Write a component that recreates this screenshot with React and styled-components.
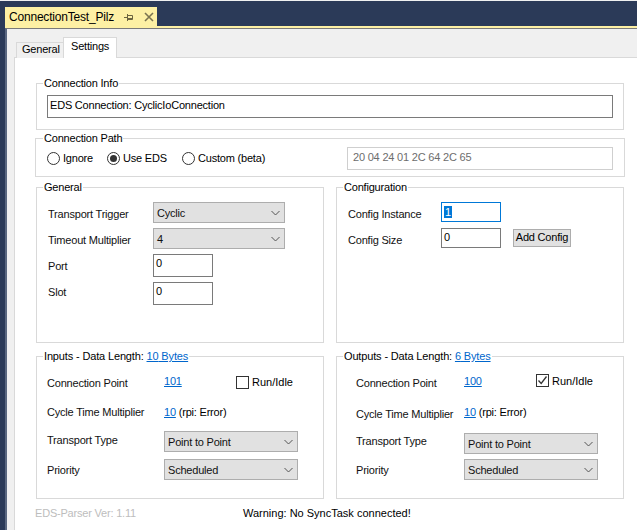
import React from 'react';
import styled, { createGlobalStyle } from 'styled-components';

const Global = createGlobalStyle`
  html, body { margin: 0; padding: 0; background: #2b3a58; }
  body { font-family: "Liberation Sans", Arial, sans-serif; font-size: 11px; letter-spacing: -0.2px; color: #000; }
  * { box-sizing: border-box; }
`;

const Window = styled.div`
  width: 637px;
  height: 530px;
  overflow: hidden;
  display: flex;
  flex-direction: column;
  background: #2b3a58;
  border-top: 1px solid #f0f0f0;
`;
const DocTabBar = styled.div`
  height: 25px;
  padding: 6px 0 0 5px;
  flex: none;
`;
const DocTab = styled.div`
  width: 152px;
  height: 19px;
  background: #fdf0a4;
  display: flex;
  align-items: center;
  padding-left: 4px;
  font-size: 12px;
  white-space: nowrap;
`;
const DocTitle = styled.span`
  width: 115px;
`;
const DocIcon = styled.svg`
  width: 10px;
  height: 10px;
  flex: none;
  margin-right: ${p => p.$mr}px;
`;
const Shell = styled.div`
  flex: 1;
  min-height: 0;
  margin-left: 5px;
  border-top: 2px solid #fdf0a4;
  display: flex;
  flex-direction: column;
`;
const Body = styled.div`
  flex: 1;
  min-height: 0;
  border-top: 1px solid #7a7a7a;
  border-left: 2px solid #5a6780;
  background: #f0f0f0;
  padding: 0 0 0 7px;
  display: flex;
  flex-direction: column;
`;
const Tabs = styled.div`
  height: 29px;
  flex: none;
  display: flex;
  align-items: flex-end;
  padding-left: 2px;
  position: relative;
  z-index: 1;
`;
const Tab = styled.div`
  height: ${p => (p.$active ? 21 : 16)}px;
  width: ${p => p.$w}px;
  background: ${p => (p.$active ? '#fff' : '#f0f0f0')};
  border: 1px solid #d9d9d9;
  border-bottom: none;
  border-right: ${p => (p.$active ? '1px solid #d9d9d9' : 'none')};
  padding: ${p => (p.$active ? '2px 0 0 7px' : '0 0 0 5px')};
  line-height: 13px;
  white-space: nowrap;
`;
const Page = styled.div`
  flex: 1;
  min-height: 0;
  background: #fff;
  border-top: 1px solid #d9d9d9;
  border-left: 1px solid #d9d9d9;
  margin-top: -1px;
  padding: 25px 13px 0 21px;
  display: flex;
  flex-direction: column;
`;
const Group = styled.section`
  position: relative;
  flex: none;
  border: 1px solid #d9d9d9;
  height: ${p => p.$h}px;
  margin: ${p => p.$m || 0};
`;
const Legend = styled.div`
  position: absolute;
  top: -7px;
  left: ${p => p.$x || 6}px;
  background: #fff;
  padding: 0 1px;
  line-height: 13px;
  white-space: nowrap;
`;
const IoLegend = styled(Legend)`
  letter-spacing: -0.15px;
`;
const InfoField = styled.div`
  position: absolute;
  left: 10px;
  right: 10px;
  top: 11px;
  height: 23px;
  border: 1px solid #7a7a7a;
  padding: 0 2px;
  line-height: 19px;
`;
const PathRow = styled.div`
  height: 100%;
  display: flex;
  align-items: center;
  padding: 1px 11px 0 11px;
`;
const Radio = styled.label`
  display: flex;
  align-items: center;
  gap: 3px;
  width: ${p => p.$w}px;
  white-space: nowrap;
`;
const RadioDot = styled.span`
  width: 13px;
  height: 13px;
  flex: none;
  border-radius: 50%;
  border: 1px solid #333;
  display: flex;
  align-items: center;
  justify-content: center;
  &::after {
    content: '';
    width: 7px;
    height: 7px;
    border-radius: 50%;
    background: ${p => (p.$on ? '#333' : 'transparent')};
  }
`;
const PathField = styled.div`
  margin-left: auto;
  width: 266px;
  height: 23px;
  border: 1px solid #cfcfcf;
  padding: 0 5px;
  line-height: 18px;
  color: #6d6d6d;
`;
const Split = styled.div`
  flex: none;
  display: grid;
  grid-template-columns: 288px 288px;
  column-gap: 12px;
  margin-top: ${p => p.$mt}px;
`;
const FormGrid = styled.div`
  display: grid;
  grid-template-columns: ${p => p.$col}px auto;
  justify-content: start;
  align-items: center;
  row-gap: ${p => p.$gap}px;
  padding: 14px 0 0 11px;
`;
const Label = styled.span`
  white-space: nowrap;
  color: #111;
  margin-top: ${p => p.$mt || 0}px;
`;
const Select = styled.div`
  width: ${p => p.$w}px;
  height: 21px;
  background: #e1e1e1;
  border: 1px solid #adadad;
  display: flex;
  align-items: center;
  justify-content: space-between;
  padding: 0 4px 0 3px;
  color: #111;
`;
const Chevron = () => (
  <svg width="9" height="6" viewBox="0 0 9 6" fill="none">
    <path d="M0.5 1 L4.5 5 L8.5 1" stroke="#555" strokeWidth="1" />
  </svg>
);
const TextBox = styled.div`
  width: 60px;
  height: ${p => p.$h}px;
  border: 1px solid ${p => (p.$focus ? '#0078d7' : '#7a7a7a')};
  padding: 1px 2px 0 2px;
  line-height: 14px;
`;
const Selected = styled.span`
  background: #0078d7;
  color: #fff;
  padding: 0 1px;
  display: inline-block;
  height: 12px;
  line-height: 12px;
  margin-top: 2px;
  vertical-align: top;
`;
const ConfigRow = styled.div`
  display: flex;
  align-items: center;
  gap: 12px;
`;
const Button = styled.div`
  width: 58px;
  height: 18px;
  background: #e1e1e1;
  border: 1px solid #adadad;
  text-align: center;
  line-height: 15px;
  white-space: nowrap;
`;
const Link = styled.span`
  color: #0066cc;
  text-decoration: underline;
`;
const PointLink = styled(Link)`
  margin-top: -4px;
`;
const IoRow = styled.div`
  display: grid;
  grid-template-columns: ${p => p.$col}px 72px auto;
  align-items: center;
  height: ${p => p.$h}px;
  padding-left: ${p => p.$pl}px;
`;
const IoSelectRow = styled(IoRow)`
  grid-template-columns: ${p => p.$col}px auto;
`;
const RpiText = styled.span`
  grid-column: 2 / 4;
`;
const Check = styled.label`
  display: flex;
  align-items: center;
  gap: 3px;
  letter-spacing: 0;
  margin-top: ${p => p.$mt}px;
`;
const CheckBox = styled.span`
  width: 13px;
  height: 13px;
  border: 1px solid #333;
  display: flex;
  align-items: center;
  justify-content: center;
`;
const IoBody = styled.div`
  padding-top: 13px;
`;
const Footer = styled.div`
  flex: none;
  display: flex;
  margin: 7px 0 0 -1px;
  line-height: 14px;
`;
const Version = styled.span`
  color: #bdbdbd;
  width: 208px;
`;
const Warning = styled.span`
  letter-spacing: 0;
`;

const IoGroup = ({ title, bytes, point, checked, o }) => (
  <Group $h={143}>
    <IoLegend>
      {title} - Data Length: <Link>{bytes} Bytes</Link>
    </IoLegend>
    <IoBody>
      <IoRow $col={o.col} $h={26} $pl={o.pl}>
        <Label>Connection Point</Label>
        <PointLink>{point}</PointLink>
        <Check $mt={o.checkMt}>
          <CheckBox>
            {checked && (
              <svg width="11" height="11" viewBox="0 0 11 11" fill="none">
                <path d="M1.5 5.5 L4.2 8.5 L9.5 1.5" stroke="#333" strokeWidth="1.3" />
              </svg>
            )}
          </CheckBox>
          Run/Idle
        </Check>
      </IoRow>
      <IoRow $col={o.col} $h={32} $pl={o.pl}>
        <Label $mt={o.cycleMt}>Cycle Time Multiplier</Label>
        <RpiText>
          <Link>10</Link> (rpi: Error)
        </RpiText>
      </IoRow>
      <IoSelectRow $col={o.col} $h={o.transportH} $pl={o.pl}>
        <Label $mt={o.transportMt}>Transport Type</Label>
        <Select $w={134}>
          Point to Point
          <Chevron />
        </Select>
      </IoSelectRow>
      <IoSelectRow $col={o.col} $h={o.priorityH} $pl={o.pl}>
        <Label>Priority</Label>
        <Select $w={134}>
          Scheduled
          <Chevron />
        </Select>
      </IoSelectRow>
    </IoBody>
  </Group>
);

const inputsLayout = { col: 117, pl: 10, checkMt: -2, cycleMt: 0, transportH: 27, transportMt: -3, priorityH: 29 };
const outputsLayout = { col: 108, pl: 19, checkMt: -5, cycleMt: 3, transportH: 31, transportMt: -6, priorityH: 21 };

export default function App() {
  return (
    <>
      <Global />
      <Window>
        <DocTabBar>
          <DocTab>
            <DocTitle>ConnectionTest_Pilz</DocTitle>
            <DocIcon viewBox="0 0 10 10" fill="none" $mr={10}>
              <path d="M0 5.5 H3 M3.5 2 V9 M3.5 3.5 H8.5 V7.5 H3.5 M3.5 6.5 H8.5" stroke="#6b6440" strokeWidth="1" />
            </DocIcon>
            <DocIcon viewBox="0 0 10 10" fill="none" $mr={0}>
              <path d="M1 1 L9 9 M9 1 L1 9" stroke="#7a7350" strokeWidth="1.6" />
            </DocIcon>
          </DocTab>
        </DocTabBar>
        <Shell>
          <Body>
            <Tabs>
              <Tab $w={47}>General</Tab>
              <Tab $active $w={54}>Settings</Tab>
            </Tabs>
            <Page>
              <Group $h={47}>
                <Legend>Connection Info</Legend>
                <InfoField>EDS Connection: CyclicIoConnection</InfoField>
              </Group>
              <Group $h={39} $m="8px -1px 0 -1px">
                <Legend $x={7}>Connection Path</Legend>
                <PathRow>
                  <Radio $w={60}><RadioDot />Ignore</Radio>
                  <Radio $w={75}><RadioDot $on />Use EDS</Radio>
                  <Radio $w={85}><RadioDot />Custom (beta)</Radio>
                  <PathField>20 04 24 01 2C 64 2C 65</PathField>
                </PathRow>
              </Group>
              <Split $mt={10}>
                <Group $h={156}>
                  <Legend>General</Legend>
                  <FormGrid $col={105} $gap={5}>
                    <Label $mt={3}>Transport Trigger</Label>
                    <Select $w={132}>Cyclic<Chevron /></Select>
                    <Label $mt={3}>Timeout Multiplier</Label>
                    <Select $w={132}>4<Chevron /></Select>
                    <Label>Port</Label>
                    <TextBox $h={23}>0</TextBox>
                    <Label $mt={-4}>Slot</Label>
                    <TextBox $h={23}>0</TextBox>
                  </FormGrid>
                </Group>
                <Group $h={156}>
                  <Legend>Configuration</Legend>
                  <FormGrid $col={93} $gap={6}>
                    <Label $mt={4}>Config Instance</Label>
                    <TextBox $h={20} $focus><Selected>1</Selected></TextBox>
                    <Label $mt={4}>Config Size</Label>
                    <ConfigRow>
                      <TextBox $h={20}>0</TextBox>
                      <Button>Add Config</Button>
                    </ConfigRow>
                  </FormGrid>
                </Group>
              </Split>
              <Split $mt={13}>
                <IoGroup title="Inputs" bytes="10" point="101" o={inputsLayout} />
                <IoGroup title="Outputs" bytes="6" point="100" checked o={outputsLayout} />
              </Split>
              <Footer>
                <Version>EDS-Parser Ver: 1.11</Version>
                <Warning>Warning: No SyncTask connected!</Warning>
              </Footer>
            </Page>
          </Body>
        </Shell>
      </Window>
    </>
  );
}
